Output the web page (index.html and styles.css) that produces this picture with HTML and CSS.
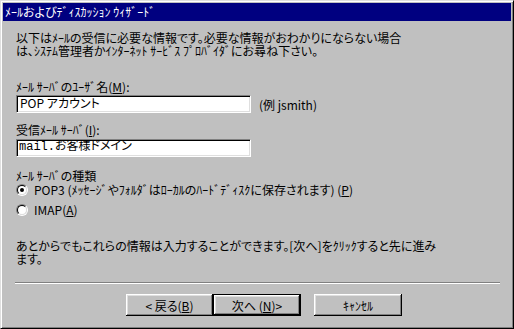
FILE: index.html
```html
<!DOCTYPE html>
<html lang="ja">
<head>
  <meta charset="UTF-8" />
  <title>ﾒｰﾙおよびﾃﾞｨｽｶｯｼｮﾝ ｳｨｻﾞｰﾄﾞ</title>
  <link rel="stylesheet" href="styles.css">
</head>
<body>
  <div class="window">
    <div class="titlebar">ﾒｰﾙおよびﾃﾞｨｽｶｯｼｮﾝ ｳｨｻﾞｰﾄﾞ</div>

    <div class="content">
      <p class="intro">以下はﾒｰﾙの受信に必要な情報です。必要な情報がおわかりにならない場合<br>は､ｼｽﾃﾑ管理者かｲﾝﾀｰﾈｯﾄ ｻｰﾋﾞｽ ﾌﾟﾛﾊﾞｲﾀﾞにお尋ね下さい。</p>

      <div class="label label-user">ﾒｰﾙ ｻｰﾊﾞのﾕｰｻﾞ名(<u>M</u>):</div>
      <div class="field-row field-user">
        <div class="field">POP アカウント</div>
        <span class="hint">(例 jsmith)</span>
      </div>

      <div class="label label-server">受信ﾒｰﾙ ｻｰﾊﾞ(<u>I</u>):</div>
      <div class="field-row field-server">
        <div class="field mono">mail.お客様ドメイン</div>
      </div>

      <div class="label label-type">ﾒｰﾙ ｻｰﾊﾞの種類</div>
      <div class="radio-row">
        <span class="radio checked"><span class="radio-in"></span></span>
        <span>POP3 (ﾒｯｾｰｼﾞやﾌｫﾙﾀﾞはﾛｰｶﾙのﾊｰﾄﾞﾃﾞｨｽｸに保存されます) (<u>P</u>)</span>
      </div>
      <div class="radio-row second">
        <span class="radio"><span class="radio-in"></span></span>
        <span>IMAP(<u>A</u>)</span>
      </div>

      <p class="note">あとからでもこれらの情報は入力することができます。[次へ]をｸﾘｯｸすると先に進み<br>ます。</p>

      <div class="separator"></div>

      <div class="buttons">
        <div class="btn">&lt; 戻る(<u>B</u>)</div>
        <div class="btn default"><span class="btn-face">次へ (<u>N</u>)&gt;</span></div>
        <div class="btn cancel">ｷｬﾝｾﾙ</div>
      </div>
    </div>
  </div>
</body>
</html>
```

FILE: styles.css
```css
body {
  margin: 0;
  background: #c0c0c0;
  font-family: "Noto Sans CJK JP", "Noto Sans", sans-serif;
  font-size: 12px;
  font-feature-settings: "palt";
  color: #000;
}

.window {
  width: 514px;
  height: 329px;
  box-sizing: border-box;
  padding: 2px;
  background: #c0c0c0;
  border: 1px solid;
  border-color: #dfdfdf #000 #000 #dfdfdf;
  box-shadow: inset 1px 1px #fff, inset -1px -1px #808080;
}

.titlebar {
  height: 18px;
  line-height: 18px;
  padding-left: 2px;
  background: #000080;
  color: #fff;
  white-space: nowrap;
}

.content {
  padding: 10px 11px 0 13px;
}

p {
  margin: 0;
  line-height: 13px;
}

.label {
  line-height: 13px;
}

.label-user { margin-top: 23px; }
.label-server { margin-top: 10px; }
.label-type { margin-top: 12px; }

.field-row {
  display: flex;
  align-items: center;
  gap: 8px;
}

.field-user { margin-top: 2px; }
.field-server { margin-top: 3px; }

.field {
  width: 235px;
  height: 18px;
  box-sizing: border-box;
  padding: 0 3px;
  line-height: 14px;
  background: #fff;
  border: 1px solid;
  border-color: #808080 #fff #fff #808080;
  box-shadow: inset 1px 1px #000, inset -1px -1px #dfdfdf;
  white-space: nowrap;
  overflow: hidden;
}

.mono {
  font-family: "Liberation Mono", "Noto Sans CJK JP", monospace;
  padding-left: 2px;
}

.hint {
  line-height: 13px;
}

.radio-row {
  display: flex;
  align-items: center;
  gap: 6px;
  height: 13px;
  margin-top: 1px;
}

.radio-row.second { margin-top: 7px; }

.radio {
  width: 12px;
  height: 12px;
  box-sizing: border-box;
  border-radius: 50%;
  border: 1px solid;
  border-color: #808080 #fff #fff #808080;
  flex: none;
}

.radio-in {
  display: flex;
  align-items: center;
  justify-content: center;
  width: 10px;
  height: 10px;
  box-sizing: border-box;
  border-radius: 50%;
  border: 1px solid;
  border-color: #000 #dfdfdf #dfdfdf #000;
  background: #fff;
}

.radio.checked .radio-in::after {
  content: "";
  width: 4px;
  height: 4px;
  border-radius: 50%;
  background: #000;
}

.note {
  margin-top: 23px;
}

.separator {
  margin: 17px 0 0 -1px;
  border-top: 1px solid #808080;
  border-bottom: 1px solid #fff;
}

.buttons {
  display: flex;
  margin: 10px 0 0 110px;
}

.btn {
  width: 87px;
  height: 22px;
  box-sizing: border-box;
  display: flex;
  align-items: center;
  justify-content: center;
  background: #c0c0c0;
  box-shadow: inset -1px -1px #000, inset 1px 1px #fff, inset -2px -2px #808080, inset 2px 2px #dfdfdf;
  white-space: nowrap;
}

.btn.default {
  width: 88px;
  border: 1px solid #000;
  box-shadow: none;
  padding: 0;
}

.btn-face {
  width: 100%;
  height: 100%;
  display: flex;
  align-items: center;
  justify-content: center;
  box-shadow: inset -1px -1px #000, inset 1px 1px #fff, inset -2px -2px #808080, inset 2px 2px #dfdfdf;
}

.btn.cancel {
  width: 88px;
  margin-left: 13px;
}
```
